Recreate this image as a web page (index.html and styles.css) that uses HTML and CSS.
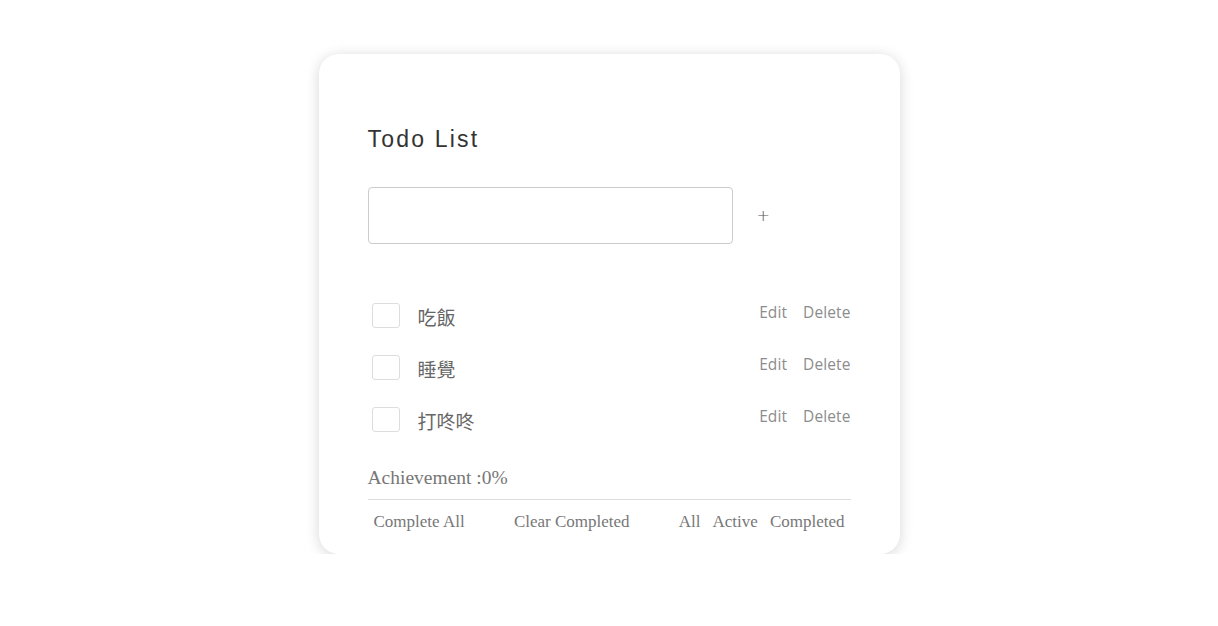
FILE: index.html
```html
<!DOCTYPE html>
<html lang="zh-Hant">
<head>
<meta charset="utf-8">
<title>Todo List</title>
<link rel="stylesheet" href="styles.css">
</head>
<body>
<div class="card">
  <h1 class="title">Todo List</h1>
  <div class="add-row">
    <input class="add-input" type="text">
    <button class="add-btn">+</button>
  </div>
  <ul class="list">
    <li class="item">
      <span class="check"></span>
      <span class="label">吃飯</span>
      <span class="actions"><button class="act">Edit</button><button class="act">Delete</button></span>
    </li>
    <li class="item">
      <span class="check"></span>
      <span class="label">睡覺</span>
      <span class="actions"><button class="act">Edit</button><button class="act">Delete</button></span>
    </li>
    <li class="item">
      <span class="check"></span>
      <span class="label">打咚咚</span>
      <span class="actions"><button class="act">Edit</button><button class="act">Delete</button></span>
    </li>
  </ul>
  <div class="achievement">Achievement :0%</div>
  <div class="footer">
    <button class="foot-btn">Complete All</button>
    <button class="foot-btn">Clear Completed</button>
    <div class="filters">
      <button class="foot-btn">All</button>
      <button class="foot-btn">Active</button>
      <button class="foot-btn">Completed</button>
    </div>
  </div>
</div>
</body>
</html>
```

FILE: styles.css
```css
html, body {
  margin: 0;
  padding: 0;
  background: #fff;
}
body {
  padding-top: 54px;
  font-family: "Liberation Sans", Arial, sans-serif;
}
.card {
  width: 581px;
  box-sizing: border-box;
  margin: 0 auto;
  background: #fff;
  border-radius: 20px;
  box-shadow: 0 2px 14px rgba(0, 0, 0, 0.16);
  padding: 70px 49px 17px 49px;
}
.title {
  margin: 0;
  font-family: "Liberation Sans", Arial, sans-serif;
  font-weight: normal;
  font-size: 23px;
  line-height: 30px;
  letter-spacing: 2.2px;
  color: #333;
}
.add-row {
  display: flex;
  align-items: center;
  margin-top: 33px;
}
.add-input {
  width: 365px;
  height: 57px;
  box-sizing: border-box;
  border: 1px solid #ccc;
  border-radius: 4px;
  margin: 0;
  outline: none;
}
.add-btn {
  background: none;
  border: none;
  padding: 0;
  margin-left: 24px;
  font-family: "DejaVu Sans", sans-serif;
  font-weight: 200;
  font-size: 16px;
  color: #555;
}
.list {
  list-style: none;
  margin: 45px 0 0 0;
  padding: 0;
}
.item {
  display: flex;
  align-items: center;
  height: 52px;
}
.check {
  width: 26px;
  height: 23px;
  border: 1px solid #ddd;
  border-radius: 3px;
  margin-left: 4px;
  flex: none;
}
.label {
  margin-left: 18px;
  font-family: "Noto Sans CJK TC", "Noto Sans CJK SC", sans-serif;
  font-size: 19px;
  color: #666;
  flex: 1;
  padding-top: 3px;
}
.actions {
  display: flex;
  gap: 16px;
  margin-bottom: 6px;
}
.act {
  background: none;
  border: none;
  padding: 0;
  font-family: "Open Sans", sans-serif;
  font-size: 15.5px;
  letter-spacing: 0.1px;
  color: #8c8c8c;
}
.achievement {
  margin-top: 18px;
  font-family: "Liberation Serif", "Times New Roman", serif;
  font-size: 19.5px;
  line-height: 30px;
  color: #777;
  padding-bottom: 6px;
  border-bottom: 1px solid #ddd;
}
.footer {
  display: flex;
  justify-content: space-between;
  align-items: center;
  margin-top: 7px;
}
.filters {
  display: flex;
}
.foot-btn {
  background: none;
  border: none;
  padding: 0 6px;
  font-family: "Liberation Serif", "Times New Roman", serif;
  font-size: 17px;
  line-height: 30px;
  color: #777;
}
```
